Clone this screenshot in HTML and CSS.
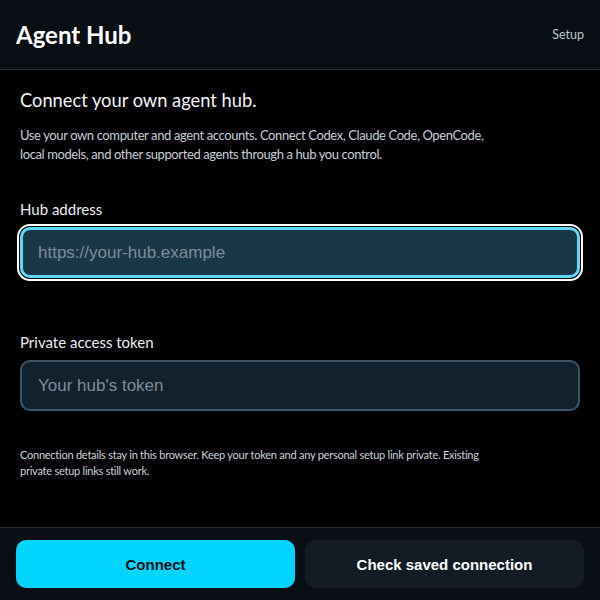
FILE: index.html
```html
<!DOCTYPE html>
<html lang="en">
<head>
<meta charset="utf-8">
<title>Agent Hub</title>
<link rel="stylesheet" href="styles.css">
</head>
<body>
<div class="app">
  <header class="topbar">
    <h1 class="brand">Agent Hub</h1>
    <a class="setup-link" href="#">Setup</a>
  </header>
  <main class="content">
    <h2 class="title">Connect your own agent hub.</h2>
    <p class="intro">Use your own computer and agent accounts. Connect Codex, Claude Code, OpenCode, local models, and other supported agents through a hub you control.</p>
    <div class="field">
      <label class="field-label" for="hub">Hub address</label>
      <input class="field-input is-focused" id="hub" type="text" placeholder="https://your-hub.example">
    </div>
    <div class="field field-token">
      <label class="field-label" for="token">Private access token</label>
      <input class="field-input" id="token" type="text" placeholder="Your hub's token">
    </div>
    <p class="note">Connection details stay in this browser. Keep your token and any personal setup link private. Existing private setup links still work.</p>
  </main>
  <footer class="actions">
    <button class="btn btn-primary" type="button">Connect</button>
    <button class="btn btn-secondary" type="button">Check saved connection</button>
  </footer>
</div>
</body>
</html>
```
FILE: styles.css
```css
* { box-sizing: border-box; }
html, body { margin: 0; padding: 0; background: #000; }
body { font-family: "Lato", "Noto Sans", sans-serif; color: #e8edf2; }
.app { display: flex; flex-direction: column; height: 600px; }
.topbar {
  height: 70px;
  display: flex;
  align-items: center;
  justify-content: space-between;
  padding: 0 16px;
  background: #0a0e15;
  border-bottom: 1px solid #272e37;
}
.brand { margin: 0; font-size: 24px; font-weight: 700; color: #fff; letter-spacing: 0; }
.setup-link { font-size: 12.5px; color: #b9c4cf; text-decoration: none; }
.content { flex: 1; padding: 18px 20px 0; }
.title { margin: 0; font-size: 18.3px; font-weight: 400; line-height: 24px; color: #f2f4f7; }
.intro { margin: 14px 0 0; max-width: 490px; font-size: 13px; letter-spacing: -0.39px; line-height: 19px; color: #c6ced7; }
.field { margin-top: 35px; display: flex; flex-direction: column; }
.field-token { margin-top: 54px; }
.field-label { font-size: 15px; line-height: 20px; color: #e9edf1; margin-bottom: 8px; }
.field-input {
  height: 51px;
  width: 100%;
  padding: 0 16px;
  border: 2px solid #3e5569;
  border-radius: 10px;
  background: #12212e;
  font-family: "Liberation Sans", Arial, sans-serif;
  font-size: 17px;
  color: #e8edf2;
  outline: none;
}
.field-input::placeholder { color: #7f8c98; }
.field-input.is-focused {
  border: 3px solid #5fd8f6;
  background: #1a3649;
  padding-left: 15px;
  box-shadow: 0 0 0 1px #000, 0 0 0 3px #fff;
}
.note { margin: 36px 0 0; max-width: 480px; font-size: 11px; letter-spacing: -0.24px; line-height: 16px; color: #cbd3db; }
.actions {
  display: flex;
  gap: 10px;
  padding: 12px 16px;
  background: #0a0e15;
  border-top: 1px solid #272e37;
}
.btn {
  flex: 1;
  height: 48px;
  border: 0;
  border-radius: 10px;
  font-family: "Liberation Sans", Arial, sans-serif;
  font-size: 15px;
  font-weight: 700;
}
.btn-primary { background: #00d4ff; color: #061018; }
.btn-secondary { background: #131b25; color: #fff; }
```
